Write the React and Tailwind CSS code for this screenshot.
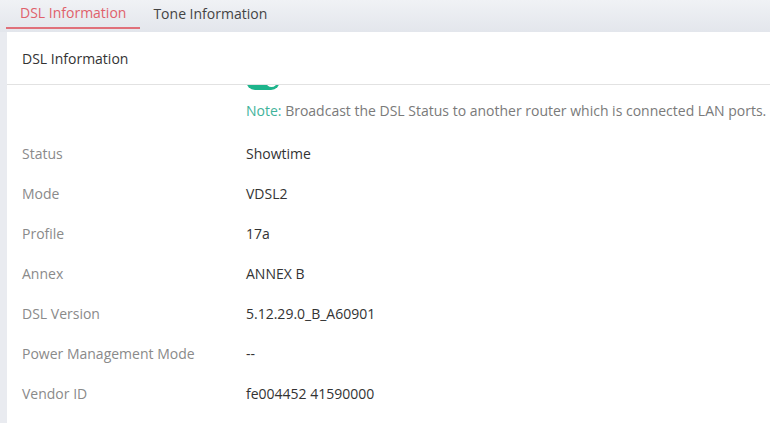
import React from "react";

const rows = [
  ["Status", "Showtime"],
  ["Mode", "VDSL2"],
  ["Profile", "17a"],
  ["Annex", "ANNEX B"],
  ["DSL Version", "5.12.29.0_B_A60901"],
  ["Power Management Mode", "--"],
  ["Vendor ID", "fe004452 41590000"],
];

export default function App() {
  return (
    <div
      className="w-[770px] h-[423px] overflow-hidden bg-[#e9ebf0] flex flex-col"
      style={{ fontFamily: '"Open Sans", "Liberation Sans", sans-serif' }}
    >
      <div className="h-[32px] shrink-0 flex items-start bg-gradient-to-b from-[#f0f2f5] to-[#e3e6ec] pl-[6px]">
        <div className="h-[29px] px-[14px] pb-[3px] flex items-center text-[14px] text-[#e0616b] border-b-2 border-[#e0707a]">
          DSL Information
        </div>
        <div className="h-[29px] px-[13px] pb-[3px] flex items-center text-[14px] text-[#444]">
          Tone Information
        </div>
      </div>
      <div className="flex-1 ml-[7px] bg-white flex flex-col overflow-hidden">
        <div className="h-[53px] shrink-0 flex items-center px-[15px] text-[14px] text-[#333] border-b border-[#e2e2e2] relative z-10 bg-white">
          DSL Information
        </div>
        <div className="flex flex-col -mt-[13px]">
          <div className="flex pl-[239px] h-[18px]">
            <div className="w-[34px] h-[18px] rounded-full bg-[#1db48b] flex items-center justify-end pr-[3px]">
              <div className="w-[11px] h-[11px] rounded-full bg-white" />
            </div>
          </div>
          <div className="pl-[239px] pt-[10px] text-[14px] text-[#7a7a7a] whitespace-nowrap">
            <span className="text-[#3fb39b]">Note:</span> Broadcast the DSL Status to another router which is connected LAN ports.
          </div>
          <div className="flex flex-col pt-[12px]">
            {rows.map(([k, v]) => (
              <div key={k} className="h-[40px] flex items-center text-[14px]">
                <div className="w-[239px] pl-[15px] text-[#8a8a8a]">{k}</div>
                <div className="text-[#333]">{v}</div>
              </div>
            ))}
          </div>
        </div>
      </div>
    </div>
  );
}
